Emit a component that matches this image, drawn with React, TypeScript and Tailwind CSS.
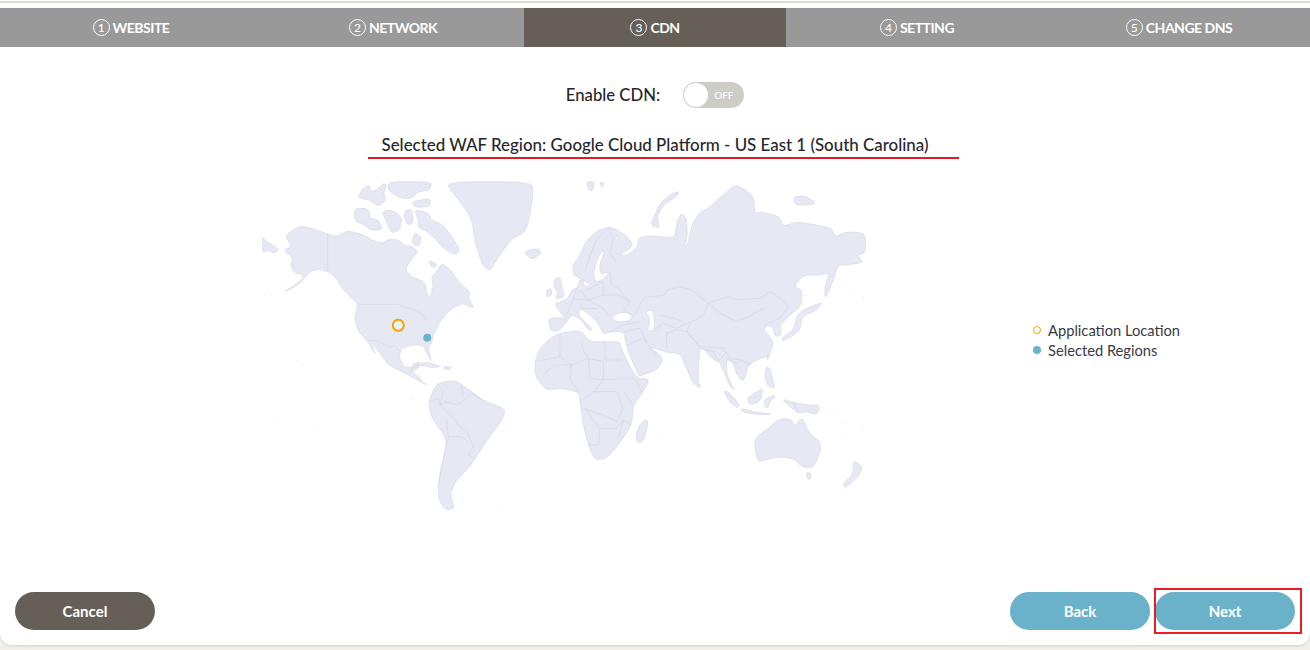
const steps = [
  { n: "1", label: "WEBSITE" },
  { n: "2", label: "NETWORK" },
  { n: "3", label: "CDN", active: true },
  { n: "4", label: "SETTING" },
  { n: "5", label: "CHANGE DNS" },
];

// rounds off a traced polygon so the coasts don't look cut with scissors
function smooth(d: string) {
  let pts = d.trim().split(/\s+/).map((p) => p.split(",").map(Number));
  for (let i = 0; i < 2; i++) {
    const next: number[][] = [];
    pts.forEach((p, j) => {
      const q = pts[(j + 1) % pts.length];
      next.push([p[0] * 0.8 + q[0] * 0.2, p[1] * 0.8 + q[1] * 0.2]);
      next.push([p[0] * 0.2 + q[0] * 0.8, p[1] * 0.2 + q[1] * 0.8]);
    });
    pts = next;
  }
  return "M" + pts.map((p) => p[0].toFixed(1) + "," + p[1].toFixed(1)).join(" L") + " Z";
}

// traced at 3x from the left half
const americas = [
  "85,225 110,215 98,195 92,180 135,152 170,160 218,177 245,185 275,168 300,172 330,182 350,195 380,205 395,195 425,192 455,215 470,212 490,232 470,250 450,285 470,305 510,322 515,355 525,368 535,335 530,305 545,290 560,265 585,282 600,305 625,335 645,350 640,370 660,402 625,385 600,395 580,410 555,440 545,460 535,480 530,505 520,515 525,545 530,560 518,540 505,510 470,510 440,520 432,545 445,575 470,578 478,565 495,560 490,580 470,590 485,600 500,620 520,630 505,625 480,610 440,590 400,570 372,530 345,495 365,545 335,495 310,470 298,430 310,388 285,365 262,340 240,305 218,290 190,282 165,290 130,330 80,355 135,320 150,300 120,295 105,270 115,250",
  "22,185 35,200 60,215 72,225 55,235 40,225 22,235",
  "480,110 490,105 520,115 530,135 565,150 590,185 615,225 600,240 575,225 560,215 540,190 510,165 490,160 490,135",
  "310,65 325,40 345,30 345,50 365,45 385,25 395,30 385,55 395,75 370,95 345,75 320,72",
  "400,20 530,20 525,45 490,50 470,70 440,70 420,60 400,45",
  "470,80 525,70 525,95 480,97",
  "298,100 340,100 345,130 370,135 385,165 345,165 330,150 300,140",
  "380,110 410,105 440,125 435,165 410,175 395,140",
  "445,110 470,100 475,145 455,150",
  "480,170 500,190 490,215 470,205",
  "520,255 550,270 530,280",
  "570,20 830,20 835,60 815,170 770,190 720,260 705,290 680,265 660,200 650,130 600,60",
  "805,230 850,220 860,235 830,255",
  "480,572 515,560 560,575 530,578 500,570 480,580",
  "565,575 590,575 585,585 568,583",
  "520,680 545,625 600,615 650,650 690,680 750,700 745,730 700,790 660,850 640,880 600,920 585,960 600,1000 570,1005 550,970 550,920 570,830 575,790 530,730",
];

// traced at 3x from the right half
const oldWorld = [
  "-35,432 -15,428 15,428 -5,405 -15,385 5,380 25,368 35,345 55,335 58,315 70,315 72,335 95,330 60,310 40,300 38,272 60,240 80,195 115,165 150,155 190,175 220,207 205,225 185,235 195,245 235,215 235,190 260,182 300,185 345,190 350,140 365,115 380,130 382,190 370,218 385,205 395,150 420,110 445,100 480,68 525,30 550,40 580,65 585,115 600,110 660,125 668,155 710,140 770,150 815,160 825,185 860,170 917,175 917,235 890,240 912,262 860,270 835,270 825,300 810,340 795,372 795,330 810,295 770,300 730,300 700,335 728,345 722,395 690,420 660,450 665,480 645,485 640,460 625,450 610,465 635,490 640,510 625,545 600,550 565,570 560,590 550,620 530,600 520,565 500,550 500,600 525,650 505,625 480,560 460,555 420,510 415,570 415,628 400,628 375,570 360,535 320,532 300,525 265,515 300,540 310,555 290,585 240,603 235,600 205,530 195,490 190,470 150,470 130,478 115,445 85,415 60,400 55,420 75,440 100,465 85,465 60,430 35,420 20,440 -5,470 -30,465",
  "-75,560 -60,520 -30,490 0,475 60,465 90,500 130,500 180,500 185,525 228,610 270,612 250,650 220,690 215,750 175,810 140,850 105,855 85,810 70,750 60,680 55,650 0,640 -45,645 -75,600",
];
const seas = [
  "155,425 185,410 220,420 205,440 165,440",
  "255,410 280,405 285,465 262,470 270,430",
  "122,232 135,228 118,270 122,298 150,290 130,312 108,322 100,300 108,265",
];
const islands = [
  "-15,310 0,305 5,335 15,365 -15,372 -5,350 -20,335",
  "-40,345 -25,340 -25,360 -40,368",
  "355,48 330,60 300,85 282,125 272,150 300,160 290,125 310,90 355,60",
  "80,20 105,20 95,52 85,40",
  "118,20 135,25 125,38",
  "700,65 735,62 770,85 740,90 705,90",
  "790,380 770,405 725,425 720,470 665,500 670,485 700,465 715,410",
  "622,540 630,540 622,556",
  "565,565 575,565 565,575",
  "412,625 422,628 418,640 410,635",
  "618,575 630,580 640,620 645,640 625,635 615,610",
  "560,670 590,650 610,640 600,680 570,690",
  "490,645 510,655 540,690 530,700 505,675",
  "540,700 590,712 640,718 590,718 550,712",
  "615,670 650,660 630,680 625,698 612,695",
  "665,672 700,682 745,690 780,690 770,720 740,710 715,715 690,695",
  "582,790 625,760 640,745 665,730 695,735 705,755 725,725 745,770 780,800 783,825 760,880 725,875 700,850 650,845 600,860 590,850",
  "738,892 755,895 750,915 742,912",
  "880,855 908,875 895,905 855,940 850,925 880,895",
  "258,732 265,745 250,800 232,803 228,780 238,750",
];
const specksLeft = [[30, 362], [50, 360], [125, 560], [135, 565], [145, 570], [470, 672], [20, 755], [60, 740], [175, 760], [35, 915], [625, 975], [740, 995]];
const specksRight = [[360, 955], [850, 745], [910, 758], [850, 335], [880, 355], [910, 365], [800, 710], [825, 720], [850, 780], [300, 775]];

function WorldMap() {
  return (
    <svg viewBox="262 181 604 331" className="h-[331px] w-[604px] shrink-0">
      <g transform="translate(255 175) scale(0.33333)" fill="#e6e9f4" stroke="#d5d8e4" strokeWidth="2" strokeLinejoin="round">
        {americas.map((d) => (
          <path key={d} d={smooth(d)} />
        ))}
        {specksLeft.map(([x, y]) => (
          <circle key={x + "-" + y} cx={x} cy={y} r="1.5" stroke="none" fill="#d5d8e4" />
        ))}
        <g fill="none" stroke="#ced2de" strokeWidth="1.5">
          <path d="M218,177 L218,290 M310,388 L430,388 L490,410 L510,425 L515,440 M335,495 L365,497 L400,515 L420,512 L435,530" />
          <path d="M470,590 L478,565 M500,620 L490,595" />
          <path d="M555,690 L590,725 L620,760 L635,770 L655,815 L640,840 L660,850" />
          <path d="M555,690 L570,680 L610,690 L650,655 L690,680 M520,680 L550,670 L555,690 M545,625 L565,650 L555,690" />
          <path d="M575,730 L580,790 L570,830 L550,930 M580,785 L620,785 L640,800 M600,615 L620,635 L625,670" />
        </g>
      </g>
      <g transform="translate(560 175) scale(0.33333)" fill="#e6e9f4" stroke="#d5d8e4" strokeWidth="2" strokeLinejoin="round">
        {oldWorld.map((d) => (
          <path key={d} d={smooth(d)} />
        ))}
        {seas.map((d) => (
          <path key={d} d={smooth(d)} fill="#fff" />
        ))}
        {islands.map((d) => (
          <path key={d} d={smooth(d)} />
        ))}
        {specksRight.map(([x, y]) => (
          <circle key={x + "-" + y} cx={x} cy={y} r="1.5" stroke="none" fill="#d5d8e4" />
        ))}
        {/* country borders */}
        <g fill="none" stroke="#cdd1dd" strokeWidth="1.5">
          <path d="M245,380 L255,368 L315,360 L320,345 L360,335 L395,345 L445,385 L470,375 L510,365 L530,375 L600,370 L630,350 L660,370 L685,395 L660,430 L610,450" />
          <path d="M445,385 L480,415 L530,440 L565,425 L610,400 M445,385 L430,420 L390,445 L380,470 L420,515 L490,520 L510,550 L545,555 L565,565" />
          <path d="M380,470 L400,490 L420,520 L460,530 M320,470 L320,520 M385,470 L350,465 L320,475 M285,465 L310,445 L350,460 L390,440 M300,420 L340,430 L370,440" />
          <path d="M150,470 L190,450 L240,440 M190,470 L240,460 L260,500 M205,510 L250,490 L290,545 M245,380 L225,420" />
          <path d="M150,290 L155,330 L175,340 L210,380 L190,405 L220,420 M130,360 L175,360 L210,380 M80,345 L130,320 L130,360 L85,375 L60,345 M85,375 L130,400 L150,425 M85,375 L40,372 L20,420 M110,400 L60,400 M40,372 L50,340" />
          <path d="M170,265 L150,235 L160,190 L145,158 M150,155 L115,185 L90,240 L75,290" />
          <path d="M0,475 L0,545 L35,570 L85,550 L70,525 L65,500 M135,500 L135,555 L185,555 M85,550 L130,560 L130,615 L185,610 L225,610 L245,650 M-75,560 L0,545 M-50,600 L-20,570 L35,570 L30,610 L55,650 M85,550 L90,610 L130,615" />
          <path d="M60,680 L100,650 L170,650 L190,700 L170,740 L130,720 L70,700 M75,700 L120,760 L170,760 L190,735 M85,810 L115,810 L120,765 M215,750 L190,735 L175,790 M190,650 L220,690 M130,615 L100,650" />
          <path d="M460,530 L475,560 L500,530 M500,550 L530,565 L545,555 M700,682 L715,715" />
        </g>
      </g>
      <circle cx="398.3" cy="325.3" r="5.5" fill="#eef0f7" stroke="#f5a300" strokeWidth="2" />
      <circle cx="427.3" cy="337.7" r="4" fill="#6bb3ca" />
    </svg>
  );
}

export default function App() {
  return (
    <div className="relative h-[650px] w-[1310px] overflow-hidden bg-[#f1efea] font-['Lato',sans-serif] text-[#26262b]">
      <div className="flex h-[645px] flex-col rounded-b-xl bg-white pt-[8px] shadow-[0_1px_3px_rgba(0,0,0,0.12)]">
        <div className="absolute inset-x-0 top-0 h-[1px] bg-white" />
        <div className="absolute inset-x-0 top-[1px] h-[2px] bg-[#dcdcd4]" />
        <div className="grid h-[39px] grid-cols-5">
          {steps.map((s) => (
            <div
              key={s.label}
              className={
                "flex items-center justify-center gap-[3px] text-[14px] font-bold tracking-[-0.5px] text-white " +
                (s.active ? "bg-[#655f58]" : "bg-[#999999]")
              }
            >
              <span className="flex h-[17px] w-[17px] items-center justify-center rounded-full border border-white text-[12px] font-medium leading-none tracking-normal">
                {s.n}
              </span>
              <span>{s.label}</span>
            </div>
          ))}
        </div>

        <div className="mt-[35px] flex items-center justify-center gap-[23px]">
          <span className="text-[16.7px] font-medium leading-[26px]">Enable CDN:</span>
          <div className="flex h-[26px] w-[61px] items-center rounded-full bg-[#cdccc6] p-[1px]">
            <span className="h-[24px] w-[24px] rounded-full bg-white" />
            <span className="ml-[6px] text-[10px] font-medium text-white">OFF</span>
          </div>
        </div>

        <p className="mt-[25px] text-center text-[16.9px] font-medium leading-[24px]">
          Selected WAF Region: Google Cloud Platform - US East 1 (South Carolina)
        </p>

        <div className="mt-[24px] flex items-center pl-[262px]">
          <WorldMap />
          <div className="mb-[14px] ml-[167px] flex flex-col text-[14.7px] leading-[20px] text-[#3a3a45]">
            <div className="flex items-center gap-[7px]">
              <span className="h-[8px] w-[8px] rounded-full border-[1.5px] border-[#f5a300]" />
              Application Location
            </div>
            <div className="flex items-center gap-[7px]">
              <span className="h-[8px] w-[8px] rounded-full bg-[#6bb3ca]" />
              Selected Regions
            </div>
          </div>
        </div>

        <div className="mt-[80px] flex justify-between px-[15px]">
          <button className="h-[38px] w-[140px] rounded-full bg-[#655f58] text-[15px] font-bold text-white">Cancel</button>
          <div className="flex gap-[5px]">
            <button className="h-[38px] w-[140px] rounded-full bg-[#69b2c9] text-[15px] font-bold text-white">Back</button>
            <button className="h-[38px] w-[140px] rounded-full bg-[#69b2c9] text-[15px] font-bold text-white">Next</button>
          </div>
        </div>
      </div>

      {/* red annotations on top of the screenshot */}
      <div className="absolute left-[368px] top-[157px] h-[2px] w-[591px] bg-[#e01b24]" />
      <div className="absolute left-[1154px] top-[588px] h-[46px] w-[148px] border-2 border-[#ea1c24]" />
    </div>
  );
}
